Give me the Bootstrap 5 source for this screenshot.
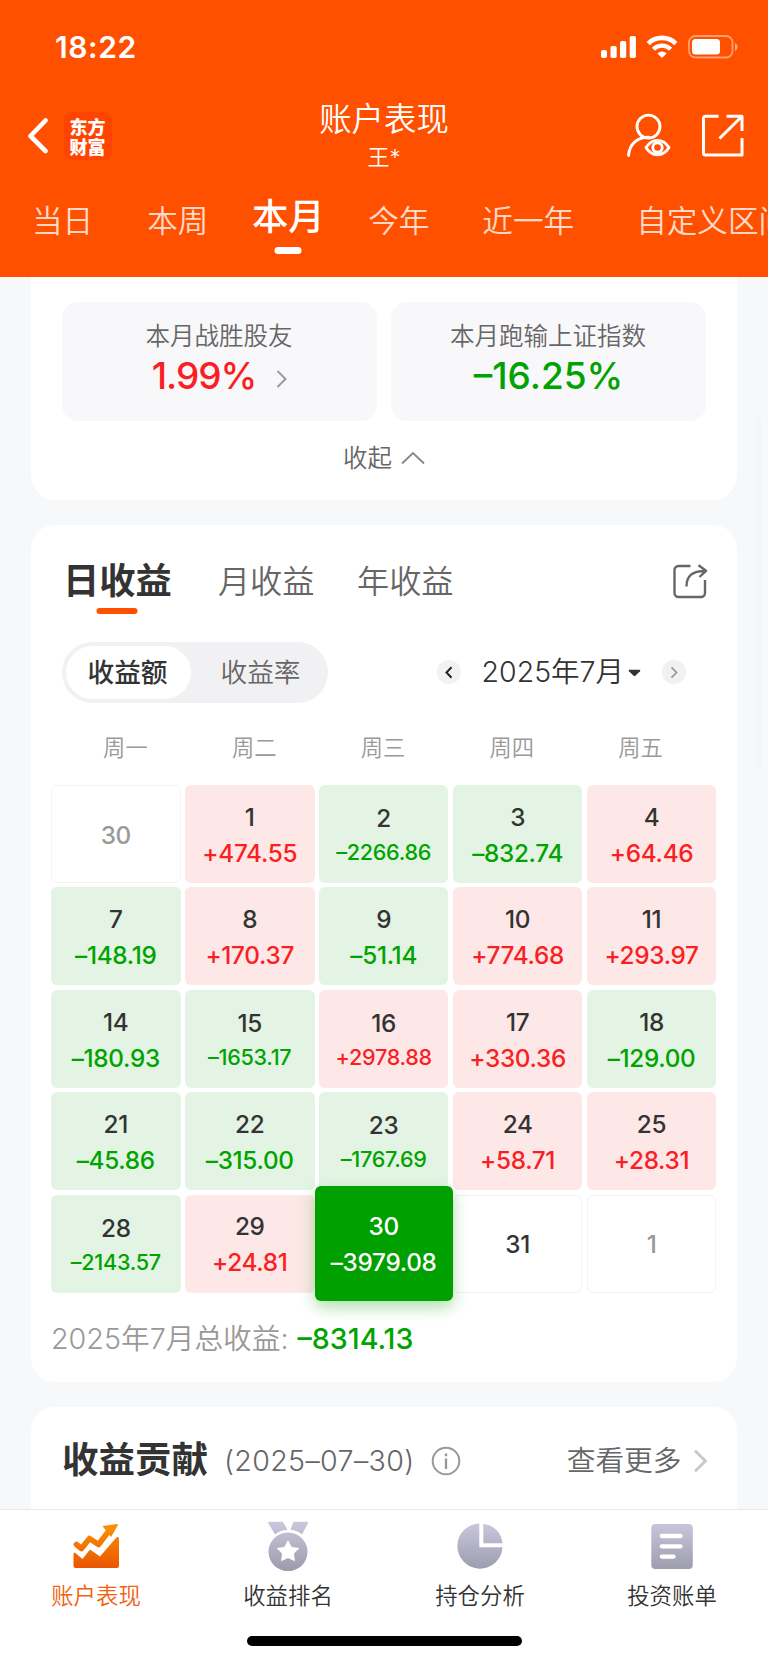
<!DOCTYPE html>
<html lang="zh-CN">
<head>
<meta charset="utf-8">
<meta name="viewport" content="width=device-width, initial-scale=1">
<title>账户表现</title>
<link href="https://cdn.jsdelivr.net/npm/bootstrap@5.3.0/dist/css/bootstrap.min.css" rel="stylesheet">
<style>
:root{--brand:#ff5000;--up:#f91f22;--down:#00a300;--ink:#333;--mute:#666;--faint:#999}
html,body{height:1663px;overflow:hidden}
body{font-family:Inter,"Noto Sans CJK SC",sans-serif;background:#f7f8fa;color:var(--ink);line-height:1.2;-webkit-font-smoothing:antialiased}
svg{display:block;flex:none}
.up{color:var(--up)}.down{color:var(--down)}
/* header */
.app-header{height:276.5px;background:var(--brand);color:#fff;flex:none}
.status-row{height:94px;padding:0 29px 0 55px}
.clock{font-size:30px;font-weight:600;letter-spacing:.6px}
.title-row{height:84px;display:grid;grid-template-columns:1fr auto 1fr;padding:0 27px}
.logo{width:48px;height:48px;border-radius:9px;background:#ff4400;font:900 18px/20px "Noto Sans CJK SC",sans-serif;text-align:center;margin-left:14.5px;padding-bottom:1px}
.page-title{font-size:32.4px;line-height:42px;font-weight:350;padding-top:5px}
.page-sub{font-size:22px;line-height:32px;font-weight:350}
.range-tabs{height:90px;padding:0 0 4px 32px;font-size:30.6px;font-weight:350;overflow:hidden}
.range-tabs>span{color:#ffffffcc;flex:none;white-space:nowrap;line-height:42px}
.range-tabs>.current{color:#fff;font-size:36.4px;font-weight:500;position:relative;top:-4px}
.current::after,.on::after{content:"";position:absolute;left:50%;transform:translateX(-50%);border-radius:4px}
.range-tabs>.current::after{width:27px;height:6.5px;background:#fff;top:51px}
/* cards */
.panel{background:#fff;border-radius:24px;margin:0 31px;flex:none}
.panel-top{height:223.5px;border-radius:0 0 24px 24px;padding:25.5px 31px 0}
.stat{height:119px;flex:1;border-radius:16px;background:#f8f8fb;padding-top:18px}
.stat-label{font-size:24.5px;line-height:32px;font-weight:350;color:var(--mute);margin-left:-1px}
.stat-value{font-size:37px;line-height:48px;font-weight:500}
.win{letter-spacing:-1px;padding-left:1px}
.fold{font-size:24.5px;font-weight:350;color:var(--mute);height:76px;padding-left:1px}
.panel-cal{height:857px;margin-top:25px;padding:0 20px}
.kind-tabs{height:114px;padding:0 9px 0 12px;font-size:32.2px;font-weight:350;color:var(--mute)}
.kind-tabs .on{position:relative;font-size:36.3px;font-weight:600;color:var(--ink)}
.on::after{width:41px;height:6px;background:var(--brand);top:48px}
.filter-row{height:66px;padding:0 31px 0 11px}
.seg{width:266px;height:61px;border-radius:31px;background:#f1f1f4;padding:4px;font-size:26.7px}
.seg>span{border-radius:27px;height:53px;line-height:53px;text-align:center}
.seg-on{width:125px;background:#fff;font-weight:500;padding-right:2px}
.seg-off{width:133px;color:var(--mute);font-weight:350;padding-left:6px}
.dot{width:24px;height:24px;border-radius:50%;background:#f1f1f4}
.month{font-size:28.5px;font-weight:350;margin:1px 21px 0;position:relative}
.weekdays{height:80px;padding:6px 12px 0 10px;font-size:22.3px;font-weight:350;color:var(--faint)}
.weekdays>span{flex:1;text-align:center}
.days{display:grid;grid-template-columns:repeat(5,129.6px);grid-auto-rows:98px;gap:4.4px 4.35px;font-size:24.3px;font-weight:500;letter-spacing:-.3px}
.day{border-radius:6px;line-height:36px;display:flex;flex-direction:column;align-items:center;justify-content:center;padding-top:1.5px}
.day.g{background:#e4f4e4}.day.g b{color:var(--down)}
.day.r{background:#fee7e7}.day.r b{color:var(--up)}
.day b{font-weight:500}
.day.long b{font-size:21.6px;line-height:33px}
.day.blank{border:1px solid #f3f3f3}
.off{color:var(--faint)}
.picked{margin:-8.6px -4.1px;background:#00a000;color:#fff;z-index:1;box-shadow:0 6px 16px #00a00055;position:relative}
.total{font-size:28.7px;font-weight:350;color:var(--faint);height:94px}
.total b{font-weight:500;color:var(--down);font-size:28.6px;margin-left:9px}
.panel-contrib{height:130px;margin-top:25px;border-radius:24px 24px 0 0;padding:0 29.5px 22px 31px}
.contrib-title{font-size:36.5px;font-weight:700}
.contrib-date{font-size:28.6px;font-weight:350;letter-spacing:.35px;color:var(--mute)}
.more{font-size:28.7px;font-weight:350;color:var(--mute)}
.scroll-hint{position:absolute;left:756px;top:417px;width:5px;height:351px;background:#f4f5f7}
/* bottom bar */
.tabbar{height:154.5px;background:#fff;border-top:1.5px solid #e9eaec;flex:none}
.tabbar a{flex:1;color:var(--ink);text-decoration:none;font-size:22.4px;font-weight:350;padding-top:10.5px}
.tabbar a.here{color:#f5600f}
.tabbar a span{line-height:30px;margin-top:8.5px}
.home-bar{width:275px;height:10.5px;border-radius:6px;background:#000;margin:0 auto 17px}
</style>
</head>
<body class="d-flex flex-column position-relative">

<header class="app-header">
  <div class="status-row d-flex align-items-center justify-content-between">
    <span class="clock">18:22</span>
    <div class="d-flex align-items-center">
      <svg width="36" height="23" viewBox="0 0 36 23" fill="#fff"><rect x="0" y="14" width="6" height="8" rx="1.8"/><rect x="9.5" y="10" width="6.2" height="12" rx="1.8"/><rect x="19" y="5" width="6.2" height="17" rx="1.8"/><rect x="28.7" y="0" width="6.2" height="22" rx="1.8"/></svg>
      <svg style="margin-left:9px" width="32" height="24" viewBox="1 0 32 24" fill="none" stroke="#fff"><path stroke-width="4.6" d="M3.2 8.6a19.5 19.5 0 0 1 27.6 0"/><path stroke-width="4.2" d="M8.4 14.2a12.2 12.2 0 0 1 17.2 0"/><path d="M17 23l-4.6-4.6a6.5 6.5 0 0 1 9.2 0z" fill="#fff" stroke="none"/></svg>
      <svg style="margin-left:10px" width="51" height="24" viewBox="0 0 51 24"><rect x="1" y="1" width="43.500" height="21.500" rx="6.500" fill="none" stroke="#fff" stroke-opacity=".45" stroke-width="1.800"/><rect x="4" y="4" width="28" height="15.500" rx="3.500" fill="#fff"/><path d="M47 8v8c3.400-1.600 3.400-6.400 0-8z" fill="#fff" fill-opacity=".5"/></svg>
    </div>
  </div>
  <div class="title-row">
    <div class="d-flex align-items-center">
      <svg width="22" height="36" viewBox="0 0 22 36" fill="none" stroke="#fff" stroke-width="4.600" stroke-linecap="round" stroke-linejoin="round"><path d="M18.500 2.500L3.500 18l15 15"/></svg>
      <div class="logo d-flex flex-column justify-content-center"><span>东方</span><span>财富</span></div>
    </div>
    <div class="text-center">
      <div class="page-title">账户表现</div>
      <div class="page-sub">王*</div>
    </div>
    <div class="d-flex align-items-center justify-content-end" style="margin-right:-4px">
      <svg width="46" height="46" viewBox="0 0 46 46" fill="none" stroke="#fff" stroke-width="2.900" stroke-linecap="round" stroke-linejoin="round"><circle cx="22.500" cy="13.600" r="11.500"/><path d="M2.500 42.500C3.500 31 11 24.300 22.500 24.300"/><path d="M20 34.600c6-9.600 17-9.600 23 0-6 9.600-17 9.600-23 0z"/><circle cx="31.500" cy="34.600" r="4.700"/></svg>
      <svg style="margin-left:29px" width="44" height="44" viewBox="0 0 44 44" fill="none" stroke="#fff" stroke-width="3" stroke-linejoin="round"><path d="M17.500 2.200H4.500a2 2 0 0 0-2 2v34.800a2 2 0 0 0 2 2H41V24M25.500 2.200H41V17M41 2.200L18.500 24.500"/></svg>
    </div>
  </div>
  <nav class="range-tabs d-flex align-items-center">
    <span>当日</span><span style="margin-left:54px">本周</span><span class="current" style="margin-left:43.5px">本月</span><span style="margin-left:43.5px">今年</span><span style="margin-left:53px">近一年</span><span style="margin-left:62px">自定义区间</span>
  </nav>
</header>

<main class="flex-grow-1 overflow-hidden d-flex flex-column">
  <section class="panel panel-top">
    <div class="d-flex text-center" style="gap:14px">
      <div class="stat">
        <div class="stat-label">本月战胜股友</div>
        <div class="stat-value up win d-flex justify-content-center align-items-center">1.99%
          <svg style="margin:5px 0 0 20px" width="12" height="20" viewBox="0 0 12 20" fill="none" stroke="#999" stroke-width="1.900"><path d="M1.500 2l8 8-8 8"/></svg></div>
      </div>
      <div class="stat">
        <div class="stat-label">本月跑输上证指数</div>
        <div class="stat-value down">–16.25%</div>
      </div>
    </div>
    <div class="fold d-flex align-items-center justify-content-center">收起<svg class="ms-2" width="26" height="16" viewBox="0 0 26 16" fill="none" stroke="#888" stroke-width="1.900"><path d="M2 12.500L13 2 24 12.500"/></svg></div>
  </section>

  <section class="panel panel-cal">
    <div class="kind-tabs d-flex align-items-center">
      <span class="on">日收益</span><span style="margin-left:46px">月收益</span><span style="margin-left:42.5px">年收益</span>
      <svg class="ms-auto" width="36" height="36" viewBox="0 0 36 36" fill="none" stroke="#666" stroke-width="2.400" stroke-linejoin="round"><path d="M18.500 2H6.500a4 4 0 0 0-4 4v23a4 4 0 0 0 4 4h22.500a4 4 0 0 0 4-4V16"/><path d="M14.500 22.500C14.500 11.500 20.500 7 33 7M26.500 1.300L34 6.800 27.500 13"/></svg>
    </div>
    <div class="filter-row d-flex align-items-center">
      <div class="seg d-flex"><span class="seg-on">收益额</span><span class="seg-off">收益率</span></div>
      <div class="dot ms-auto d-flex align-items-center justify-content-center"><svg width="8" height="13" viewBox="0 0 8 13" fill="none" stroke="#222" stroke-width="2"><path d="M6.500 1.300L1.500 6.500l5 5.200"/></svg></div>
      <span class="month d-flex align-items-center">2025年7月<svg style="margin-left:4px" width="13" height="8" viewBox="0 0 13 8"><path d="M1.200.8h10.600q1 .6.200 1.400L7.600 6.500q-1.100 1-2.200 0L1 2.200Q.2 1.400 1.200.8z" fill="#333"/></svg></span>
      <div class="dot d-flex align-items-center justify-content-center"><svg width="8" height="13" viewBox="0 0 8 13" fill="none" stroke="#999" stroke-width="1.800"><path d="M1.500 1.300l5 5.200-5 5.200"/></svg></div>
    </div>
    <div class="weekdays d-flex align-items-center"><span>周一</span><span>周二</span><span>周三</span><span>周四</span><span>周五</span></div>
    <div class="days">
      <div class="day blank off">30</div>
      <div class="day r">1<b>+474.55</b></div>
      <div class="day g long">2<b>–2266.86</b></div>
      <div class="day g">3<b>–832.74</b></div>
      <div class="day r">4<b>+64.46</b></div>
      <div class="day g">7<b>–148.19</b></div>
      <div class="day r">8<b>+170.37</b></div>
      <div class="day g">9<b>–51.14</b></div>
      <div class="day r">10<b>+774.68</b></div>
      <div class="day r">11<b>+293.97</b></div>
      <div class="day g">14<b>–180.93</b></div>
      <div class="day g long">15<b>–1653.17</b></div>
      <div class="day r long">16<b>+2978.88</b></div>
      <div class="day r">17<b>+330.36</b></div>
      <div class="day g">18<b>–129.00</b></div>
      <div class="day g">21<b>–45.86</b></div>
      <div class="day g">22<b>–315.00</b></div>
      <div class="day g long">23<b>–1767.69</b></div>
      <div class="day r">24<b>+58.71</b></div>
      <div class="day r">25<b>+28.31</b></div>
      <div class="day g long">28<b>–2143.57</b></div>
      <div class="day r">29<b>+24.81</b></div>
      <div class="day picked">30<b>–3979.08</b></div>
      <div class="day blank">31</div>
      <div class="day blank off">1</div>
    </div>
    <div class="total d-flex align-items-center"><span>2025年7月总收益:</span><b>–8314.13</b></div>
  </section>

  <section class="panel panel-contrib d-flex align-items-center">
    <span class="contrib-title">收益贡献</span>
    <span class="contrib-date" style="margin-left:16px">(2025–07–30)</span>
    <svg class="ms-3" width="30" height="30" viewBox="0 0 30 30" fill="none" stroke="#999" stroke-width="2"><circle cx="15" cy="15" r="13.300"/><path d="M15 12.500v10.500M15 7.600v2.600" stroke-width="2.400"/></svg>
    <span class="more ms-auto">查看更多</span>
    <svg style="margin-left:11px" width="15" height="24" viewBox="0 0 15 24" fill="none" stroke="#c8c8c8" stroke-width="2.800"><path d="M2 1.800L12.500 12 2 22.200"/></svg>
  </section>
</main>
<div class="scroll-hint"></div>

<footer class="tabbar d-flex flex-column justify-content-between">
  <nav class="d-flex">
    <a href="#" class="here d-flex flex-column align-items-center">
      <svg width="50" height="52" viewBox="0 0 50 52"><defs><linearGradient id="hot" gradientUnits="userSpaceOnUse" x1="0" y1="3" x2="0" y2="48"><stop stop-color="#fb9500"/><stop offset="1" stop-color="#ea5504"/></linearGradient><linearGradient id="dim" gradientUnits="userSpaceOnUse" x1="0" y1="2" x2="0" y2="50"><stop stop-color="#c9c8dc"/><stop offset="1" stop-color="#9d9bae"/></linearGradient></defs>
        <path fill="url(#hot)" d="M2.500 34.500Q2.500 31 5 33.500L11.500 39 19 29.500 29 36.500 44.500 18.500Q48 15.500 48 19v27q0 2-2 2H4.500q-2 0-2-2z"/>
        <path fill="none" stroke="url(#hot)" stroke-width="5.600" stroke-linejoin="round" stroke-linecap="round" d="M5.500 24.500L10.500 28.500 18.500 18.500 27.500 24.500 39 9.500"/><path fill="url(#hot)" d="M31.500 6L46 4q1.500 0 .7 1.500L40 17z"/></svg>
      <span>账户表现</span></a>
    <a href="#" class="d-flex flex-column align-items-center">
      <svg width="50" height="52" viewBox="0 0 50 52" fill="url(#dim)"><path d="M6.500 1.800H20l4.500 8q-7 .3-12.500 4.700L5.200 3q-.4-1.200 1.300-1.200zM30.500 1.800h13.500q1.700 0 1 1.400L39 14.500q-4.500-4-11.500-4.700z"/><path fill-rule="evenodd" d="M25 12.500a19.500 19.300 0 1 0 .01 0zM25 20l3.600 7 7.800 1.100-5.500 5.600 1.100 7.600-7-3.400-7 3.400 1.100-7.600-5.500-5.600 7.800-1.100z"/></svg>
      <span>收益排名</span></a>
    <a href="#" class="d-flex flex-column align-items-center">
      <svg width="50" height="52" viewBox="0 0 50 52" fill="url(#dim)"><path d="M24.300 3.500V27.300H47.500A22.600 22.600 0 1 1 24.300 3.500z"/><path d="M28.300 3.700Q45.500 7 47.500 23.200H28.300z"/></svg>
      <span>持仓分析</span></a>
    <a href="#" class="d-flex flex-column align-items-center">
      <svg width="50" height="52" viewBox="0 0 50 52"><rect x="4.300" y="4" width="41.500" height="45" rx="4" fill="url(#dim)"/><path d="M14.800 16h18.800M14.800 26.300h18.800M14.800 36.600h11.800" stroke="#fff" stroke-width="4.300" stroke-linecap="round"/></svg>
      <span>投资账单</span></a>
  </nav>
  <div class="home-bar"></div>
</footer>
<script src="https://cdn.jsdelivr.net/npm/bootstrap@5.3.0/dist/js/bootstrap.bundle.min.js"></script>
</body>
</html>
